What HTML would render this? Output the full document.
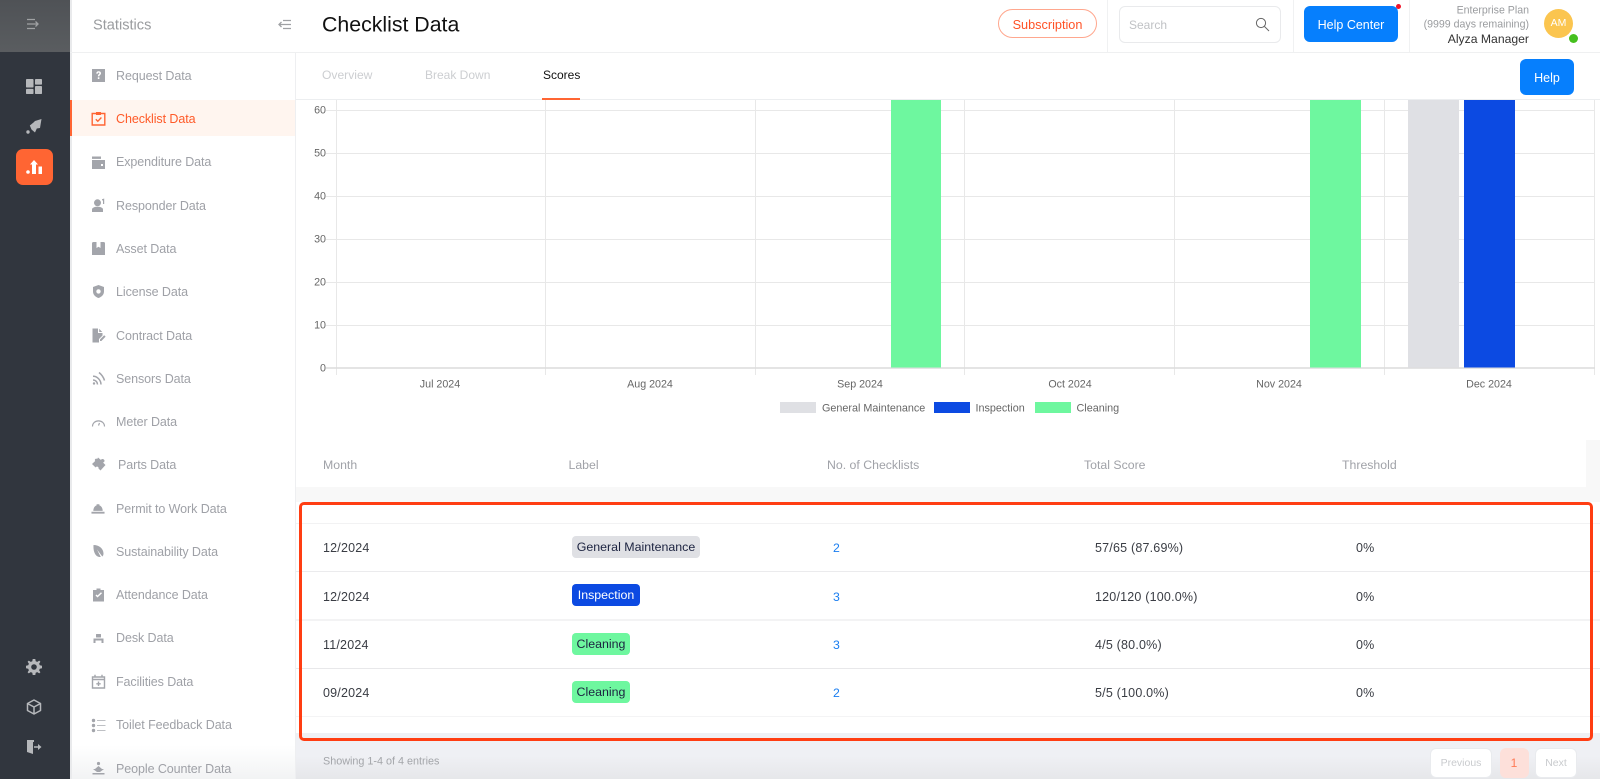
<!DOCTYPE html>
<html><head><meta charset="utf-8"><title>Checklist Data</title>
<style>
html,body{margin:0;padding:0;width:1600px;height:779px;overflow:hidden;background:#fff;font-family:"Liberation Sans",sans-serif}
.a{position:absolute}
.t{position:absolute;white-space:nowrap;transform:translateY(-50%);line-height:1}
.m{left:116px;font-size:12.5px;color:#9fa1a7;letter-spacing:-.08px}
.i{position:absolute;left:91px;width:15px;height:15px;fill:#a3a5ab}
.ax{font-size:10.7px;color:#666;transform:translate(-50%,-50%)}
.yl{font-size:10.7px;color:#666;right:1274px}
.lg{font-size:10.8px;color:#666;top:409px}
.h{font-size:12.3px;color:#a0a2a8;top:465px}
.c{font-size:12.5px;color:#3a3d44;letter-spacing:.2px}
.n{font-size:12.3px;color:#1a7ef0;left:833px}
.b{position:absolute;left:572px;height:22px;border-radius:4px;font-size:12.4px;line-height:22.5px;text-align:center;color:#1c2340}
.p{position:absolute;top:748px;height:28px;border-radius:6px;background:#fff;border:1px solid #e9ebee;color:#c9cbce;font-size:10.5px;line-height:28px;text-align:center}
</style></head><body>
<div class="a" style="left:0;top:0;width:1600px;height:779px;overflow:hidden">

<!-- rail -->
<div class="a" style="left:0;top:0;width:70px;height:779px;background:#31363e"></div>
<div class="a" style="left:0;top:0;width:70px;height:52px;background:linear-gradient(#4f5256,#5a5d60)"></div>
<svg class="a" style="left:26px;top:17px" width="14" height="14" viewBox="0 0 14 14" fill="none" stroke="#a0a2a4" stroke-width="1.3"><path d="M1 2.5H9M1 7H12M9.5 4.5L12 7L9.5 9.5M1 11.5H9"/></svg>
<svg class="a" style="left:26px;top:79px" width="16" height="15" viewBox="0 0 16 16" preserveAspectRatio="none" fill="#b6b8bb"><rect x="0" y="0" width="7.5" height="9" rx=".8"/><rect x="9" y="0" width="7" height="6" rx=".8"/><rect x="0" y="10.5" width="7.5" height="5.5" rx=".8"/><rect x="9" y="7.5" width="7" height="8.5" rx=".8"/></svg>
<svg class="a" style="left:26px;top:119px" width="16" height="15" viewBox="0 0 16 15" fill="#b6b8bb"><path d="M15.5 0L14 9L10.8 9.5L9 13.5L5.5 10.5L3.8 6.5L7.5 3.5L9 2Z"/><circle cx="2" cy="13" r="1.7"/></svg>
<div class="a" style="left:15.5px;top:149px;width:37px;height:36px;background:#ff6533;border-radius:7px"></div>
<svg class="a" style="left:26px;top:160px" width="16" height="14" viewBox="0 0 16 14" fill="#fff"><path d="M8 0L12 4.5H10V14H6V4.5H4Z"/><circle cx="2" cy="12" r="1.8"/><rect x="12.5" y="6.5" width="3.5" height="7.5"/></svg>
<svg class="a" style="left:26px;top:659px" width="16" height="16" viewBox="0 0 16 16"><path fill="#b6b8bb" d="M6.7 0H9.3L9.7 2.2L11.3 2.9L13.2 1.6L14.4 2.8L13.1 4.7L13.8 6.3L16 6.7V9.3L13.8 9.7L13.1 11.3L14.4 13.2L13.2 14.4L11.3 13.1L9.7 13.8L9.3 16H6.7L6.3 13.8L4.7 13.1L2.8 14.4L1.6 13.2L2.9 11.3L2.2 9.7L0 9.3V6.7L2.2 6.3L2.9 4.7L1.6 2.8L2.8 1.6L4.7 2.9L6.3 2.2Z"/><circle cx="8" cy="8" r="2.8" fill="#31363e"/></svg>
<svg class="a" style="left:26px;top:699px" width="16" height="16" viewBox="0 0 16 16" fill="none" stroke="#b6b8bb" stroke-width="1.5" stroke-linejoin="round"><path d="M8 1L14.5 4.5V11.5L8 15L1.5 11.5V4.5ZM1.5 4.5L8 8L14.5 4.5M8 8V15"/></svg>
<svg class="a" style="left:26px;top:739px" width="16" height="16" viewBox="0 0 16 16"><path fill="#b6b8bb" d="M1 1H8V3H7V15L1 13Z"/><path fill="#b6b8bb" d="M8 7.2H12V5L15.5 8L12 11V8.8H8Z"/></svg>

<!-- sub sidebar -->
<div class="a" style="left:70px;top:0;width:2px;height:779px;background:#e9eaec"></div>
<div class="a" style="left:72px;top:745px;width:223px;height:34px;background:linear-gradient(#fff,#f2f3f4)"></div>
<div class="a" style="left:295px;top:52px;width:1px;height:727px;background:#eeeff1"></div>
<div class="t" style="left:93px;top:26px;font-size:14.6px;color:#9a9c9f">Statistics</div>
<svg class="a" style="left:278px;top:18px" width="13" height="13" viewBox="0 0 13 13" fill="none" stroke="#9fa1a4" stroke-width="1.3"><path d="M5 2.5H13M1 6.5H13M3.5 4L1 6.5L3.5 9M5 10.5H13"/></svg>
<div class="a" style="left:70px;top:52px;width:1530px;height:1px;background:#eff0f1"></div>
<div class="a" style="left:70px;top:100px;width:225px;height:36px;background:#fff5ef"></div>
<div class="a" style="left:70px;top:100px;width:2px;height:36px;background:#ff6533"></div>

<svg class="i" style="top:68px" viewBox="0 0 15 15"><path fill-rule="evenodd" d="M1 1H14V14H1ZM5.2 5.6H6.8C6.9 4.9 7.2 4.6 7.6 4.6C8.1 4.6 8.4 4.9 8.4 5.3C8.4 6.2 6.9 6.3 6.9 8.4H8.3C8.3 7 10 6.8 10 5.2C10 4 9 3.2 7.6 3.2C6.2 3.2 5.3 4.1 5.2 5.6ZM6.8 9.3V11H8.4V9.3Z"/></svg>
<svg class="i" style="top:111px;fill:none;stroke:#ff6533;stroke-width:1.4" viewBox="0 0 15 15"><path d="M5 2.5H1.2V14H13.8V2.5H10M4.8 8.3L6.8 10.3L10.4 6.5"/><rect x="5" y="1" width="5" height="3" fill="#ff6533" stroke="none"/></svg>
<svg class="i" style="top:155px" viewBox="0 0 15 15"><rect x="1" y="1.5" width="9" height="2.4"/><path fill-rule="evenodd" d="M1 5H14V14H1ZM10 9V11H12V9Z"/></svg>
<svg class="i" style="top:198px" viewBox="0 0 15 15"><circle cx="6.5" cy="4.8" r="3.5"/><path d="M1 14V11.5C1 9.6 3.5 8.7 6.5 8.7C9.5 8.7 12 9.6 12 11.5V14Z"/><path d="M11 1.2L13.2 .5V6H12V2.2L11 2.5Z"/></svg>
<svg class="i" style="top:241px" viewBox="0 0 15 15"><path fill-rule="evenodd" d="M1 2.5C1 1.5 1.5 1 2.5 1H5.5V7L7.5 5.8L9.5 7V1H12.5C13.5 1 14 1.5 14 2.5V14H1Z"/></svg>
<svg class="i" style="top:284px" viewBox="0 0 15 15"><path fill-rule="evenodd" d="M7.5 1L13 3V7.5C13 10.8 10.5 13 7.5 14C4.5 13 2 10.8 2 7.5V3ZM7.5 5.2A2.2 2.2 0 1 0 7.5 9.6A2.2 2.2 0 1 0 7.5 5.2Z"/></svg>
<svg class="i" style="top:328px" viewBox="0 0 15 15"><path d="M1.5 .5H7V5H11.5V7.5L8 11V14.5H1.5ZM8.2 .8L11.2 4H8.2ZM9 11.5L13.2 7.2L14.6 8.6L10.4 13H9Z"/></svg>
<svg class="i" style="top:371px;fill:none;stroke:#a3a5ab;stroke-width:1.5" viewBox="0 0 15 15"><path d="M2 5.2C6 5 10 9 10 13.5M2 9C4.5 9 6.5 11 6.5 13.5M8 1.5C10.5 3.5 12.5 6 13.5 9.5"/><circle cx="3" cy="12.5" r="1.2" fill="#a3a5ab" stroke="none"/></svg>
<svg class="i" style="top:414px;fill:none;stroke:#a3a5ab;stroke-width:1.2" viewBox="0 0 15 15"><path d="M1.5 12.5C1.5 5 13.5 5 13.5 12.5M7.5 11.5L8.5 9"/></svg>
<svg class="i" style="top:456px;left:91px;width:16px;height:16px" viewBox="0 0 16 16"><path d="M7 1.5L10 4C10.5 2.5 13 2.7 13.5 4.5C13.7 5.5 13 6.2 12 6.5L14.5 9L9.5 14.5L7.5 12.5C8 10.8 5.5 9.8 4.6 11.5L1 8L4.2 5C3 3.5 5 2 6.2 3Z"/></svg>
<svg class="i" style="top:501px;width:14px" viewBox="0 0 15 15"><path d="M2.5 10C2.5 6.5 4.5 4.5 6 4.2V3H9V4.2C10.5 4.5 12.5 6.5 12.5 10ZM.5 11H14.5V13H.5Z"/></svg>
<svg class="i" style="top:544px" viewBox="0 0 15 15"><path d="M2.5 1C8 1 12.5 4.5 12.5 9.5C12.5 11 12 12 11.3 12.5L6 5.5L9.8 13C6 13.5 2 10 2.5 1Z"/></svg>
<svg class="i" style="top:587px" viewBox="0 0 15 15"><path fill-rule="evenodd" d="M5.5 1.5H9.5V3H13V14.5H2V3H5.5ZM4.5 8.5L6.5 10.5L11 6.3L10 5.3L6.5 8.5L5.5 7.5Z"/></svg>
<svg class="i" style="top:631px" viewBox="0 0 15 15"><rect x="5" y="3" width="5" height="3.5" rx=".5"/><rect x="2.5" y="7.5" width="10" height="2"/><rect x="2.5" y="9.5" width="2" height="2.5"/><rect x="10.5" y="9.5" width="2" height="2.5"/></svg>
<svg class="i" style="top:674px;fill:none;stroke:#a3a5ab;stroke-width:1.4" viewBox="0 0 15 15"><path d="M1.5 3H13.5V14H1.5ZM1.5 5.5H13.5M4 .8V3M11 .8V3M7.5 7.5V12M5.3 9.8H9.7"/></svg>
<svg class="i" style="top:718px" viewBox="0 0 15 15"><circle cx="2.5" cy="2.5" r="1.7"/><circle cx="2.5" cy="7.5" r="1.7"/><circle cx="2.5" cy="12.5" r="1.7"/><rect x="6" y="2" width="8.5" height="1" opacity=".7"/><rect x="6" y="7" width="8.5" height="1" opacity=".7"/><rect x="6" y="12" width="8.5" height="1" opacity=".7"/></svg>
<svg class="i" style="top:761px" viewBox="0 0 15 15"><circle cx="7.5" cy="2.5" r="1.6"/><path d="M2 8H4L7.5 5L11 8H13L9 11H6ZM1.5 12H13.5V13.5H1.5Z"/></svg>

<div class="t m" style="top:76px">Request Data</div>
<div class="t m" style="top:119px;color:#ff5a28">Checklist Data</div>
<div class="t m" style="top:162px">Expenditure Data</div>
<div class="t m" style="top:205.5px">Responder Data</div>
<div class="t m" style="top:249px">Asset Data</div>
<div class="t m" style="top:292px">License Data</div>
<div class="t m" style="top:336px">Contract Data</div>
<div class="t m" style="top:378.5px">Sensors Data</div>
<div class="t m" style="top:422px">Meter Data</div>
<div class="t m" style="top:465px;left:118px">Parts Data</div>
<div class="t m" style="top:509px">Permit to Work Data</div>
<div class="t m" style="top:552px">Sustainability Data</div>
<div class="t m" style="top:595px">Attendance Data</div>
<div class="t m" style="top:638px">Desk Data</div>
<div class="t m" style="top:682px">Facilities Data</div>
<div class="t m" style="top:725px">Toilet Feedback Data</div>
<div class="t m" style="top:769px">People Counter Data</div>

<!-- header -->
<div class="t" style="left:322px;top:25px;font-size:21.3px;color:#111">Checklist Data</div>
<div class="a" style="left:998px;top:9px;width:97px;height:27px;border:1px solid #ffa78e;border-radius:15px;color:#ff5226;font-size:12.7px;line-height:30px;text-align:center">Subscription</div>
<div class="a" style="left:1107px;top:0;width:1px;height:52px;background:#f0f1f2"></div>
<div class="a" style="left:1119px;top:6px;width:160px;height:35px;border:1px solid #e9eaec;border-radius:6px"></div>
<div class="t" style="left:1129px;top:25px;font-size:12px;color:#c0c2c5">Search</div>
<svg class="a" style="left:1255px;top:17px" width="15" height="15" viewBox="0 0 15 15" fill="none" stroke="#666" stroke-width="1"><circle cx="6" cy="6" r="4.6"/><path d="M9.5 9.5L14 14"/></svg>
<div class="a" style="left:1293px;top:0;width:1px;height:52px;background:#f0f1f2"></div>
<div class="a" style="left:1304px;top:6px;width:94px;height:36px;background:#067ffd;border-radius:6px;color:#fff;font-size:12.5px;line-height:38px;text-align:center">Help Center</div>
<div class="a" style="left:1395.5px;top:3.5px;width:5px;height:5px;background:#f0142a;border-radius:50%"></div>
<div class="a" style="left:1409px;top:0;width:1px;height:52px;background:#f0f1f2"></div>
<div class="t" style="right:71px;top:11px;font-size:10.6px;color:#9a9c9f">Enterprise Plan</div>
<div class="t" style="right:71px;top:25px;font-size:10.6px;color:#9a9c9f">(9999 days remaining)</div>
<div class="t" style="right:71px;top:39px;font-size:12.2px;color:#333">Alyza Manager</div>
<div class="a" style="left:1544px;top:9px;width:29px;height:29px;background:#fbc54f;border-radius:50%;color:#fff;font-size:10.5px;line-height:29px;text-align:center">AM</div>
<div class="a" style="left:1569px;top:34px;width:9px;height:9px;background:#46c01e;border-radius:50%"></div>

<!-- tabs -->
<div class="t" style="left:322px;top:75px;font-size:12.1px;color:#ccced1">Overview</div>
<div class="t" style="left:425px;top:75px;font-size:12px;color:#ccced1">Break Down</div>
<div class="t" style="left:543px;top:75px;font-size:12px;color:#111">Scores</div>
<div class="a" style="left:296px;top:99px;width:1304px;height:1px;background:#eceef0"></div>
<div class="a" style="left:542px;top:98px;width:38px;height:2px;background:#ff6533"></div>
<div class="a" style="left:1520px;top:59px;width:54px;height:36px;background:#067ffd;border-radius:6px;color:#fff;font-size:12.5px;line-height:38px;text-align:center">Help</div>

<!-- chart -->
<svg class="a" style="left:296px;top:100px" width="1304" height="340" viewBox="296 100 1304 340" fill="none">
<g stroke="#e8e8e8" stroke-width="1">
<path d="M326 110.5H1595M326 153.5H1595M326 196.5H1595M326 239.5H1595M326 282.5H1595M326 325.5H1595"/>
<path d="M336.5 100V375M545.5 100V375M755.5 100V375M964.5 100V375M1174.5 100V375M1384.5 100V375M1594.5 100V375"/>
</g>
<path d="M326 368H1595" stroke="#dcdcdc" stroke-width="1.5"/>
<rect x="891" y="100" width="50" height="267.5" fill="#6ef79f"/>
<rect x="1310" y="100" width="51" height="267.5" fill="#6ef79f"/>
<rect x="1408" y="100" width="51" height="267.5" fill="#dfe0e4"/>
<rect x="1464" y="100" width="51" height="267.5" fill="#0c4ae2"/>
<rect x="780" y="402" width="36" height="11" fill="#dfe0e4"/>
<rect x="934" y="402" width="36" height="11" fill="#0c4ae2"/>
<rect x="1035" y="402" width="36" height="11" fill="#6ef79f"/>
</svg>
<div class="t yl" style="top:111px">60</div>
<div class="t yl" style="top:154px">50</div>
<div class="t yl" style="top:197px">40</div>
<div class="t yl" style="top:240px">30</div>
<div class="t yl" style="top:283px">20</div>
<div class="t yl" style="top:326px">10</div>
<div class="t yl" style="top:369px">0</div>
<div class="t ax" style="left:440px;top:385px">Jul 2024</div>
<div class="t ax" style="left:650px;top:385px">Aug 2024</div>
<div class="t ax" style="left:860px;top:385px">Sep 2024</div>
<div class="t ax" style="left:1070px;top:385px">Oct 2024</div>
<div class="t ax" style="left:1279px;top:385px">Nov 2024</div>
<div class="t ax" style="left:1489px;top:385px">Dec 2024</div>
<div class="t lg" style="left:822px">General Maintenance</div>
<div class="t lg" style="left:975.5px">Inspection</div>
<div class="t lg" style="left:1076.5px">Cleaning</div>

<!-- table -->
<div class="a" style="left:296px;top:440px;width:1304px;height:62px;background:#f8f8f8"></div>
<div class="a" style="left:296px;top:440px;width:1290px;height:47px;background:#fff"></div>
<div class="t h" style="left:323px">Month</div>
<div class="t h" style="left:568.5px">Label</div>
<div class="t h" style="left:827px">No. of Checklists</div>
<div class="t h" style="left:1084px">Total Score</div>
<div class="t h" style="left:1342px">Threshold</div>

<div class="a" style="left:296px;top:502px;width:1304px;height:231px;background:#fff"></div>
<div class="a" style="left:296px;top:733px;width:1304px;height:46px;background:linear-gradient(#eff0f4 0,#eff0f4 50%,#e6e7ea 100%)"></div>
<div class="a" style="left:296px;top:523px;width:1304px;height:1px;background:#f2f2f3"></div>
<div class="a" style="left:296px;top:571px;width:1304px;height:1px;background:#ebebed"></div>
<div class="a" style="left:296px;top:619px;width:1304px;height:2px;background:#f3f3f4"></div>
<div class="a" style="left:296px;top:668px;width:1304px;height:1px;background:#e8e8ea"></div>
<div class="a" style="left:296px;top:716px;width:1304px;height:1px;background:#f4f4f5"></div>

<div class="t c" style="left:323px;top:548px">12/2024</div>
<div class="t c" style="left:323px;top:597px">12/2024</div>
<div class="t c" style="left:323px;top:645px">11/2024</div>
<div class="t c" style="left:323px;top:693px">09/2024</div>
<div class="b" style="top:536px;width:128px;background:#dfe0e4">General Maintenance</div>
<div class="b" style="top:584px;width:68px;background:#0c4ae2;color:#fff">Inspection</div>
<div class="b" style="top:633px;width:58px;background:#6ef79f">Cleaning</div>
<div class="b" style="top:681px;width:58px;background:#6ef79f">Cleaning</div>
<div class="t n" style="top:548px">2</div>
<div class="t n" style="top:597px">3</div>
<div class="t n" style="top:645px">3</div>
<div class="t n" style="top:693px">2</div>
<div class="t c" style="left:1095px;top:548px">57/65 (87.69%)</div>
<div class="t c" style="left:1095px;top:597px">120/120 (100.0%)</div>
<div class="t c" style="left:1095px;top:645px">4/5 (80.0%)</div>
<div class="t c" style="left:1095px;top:693px">5/5 (100.0%)</div>
<div class="t c" style="left:1356px;top:548px">0%</div>
<div class="t c" style="left:1356px;top:597px">0%</div>
<div class="t c" style="left:1356px;top:645px">0%</div>
<div class="t c" style="left:1356px;top:693px">0%</div>

<div class="a" style="left:299px;top:502px;width:1288px;height:233px;border:3px solid #ff3d12;border-radius:5px"></div>

<div class="t" style="left:323px;top:762px;font-size:10.8px;color:#a3a5a9">Showing 1-4 of 4 entries</div>
<div class="p" style="left:1430px;width:60px">Previous</div>
<div class="p" style="left:1499.5px;width:27px;border-color:#fde0da;background:#fde0da;color:#ff7a55;font-size:12px">1</div>
<div class="p" style="left:1535px;width:40px">Next</div>
</div>
</body></html>
